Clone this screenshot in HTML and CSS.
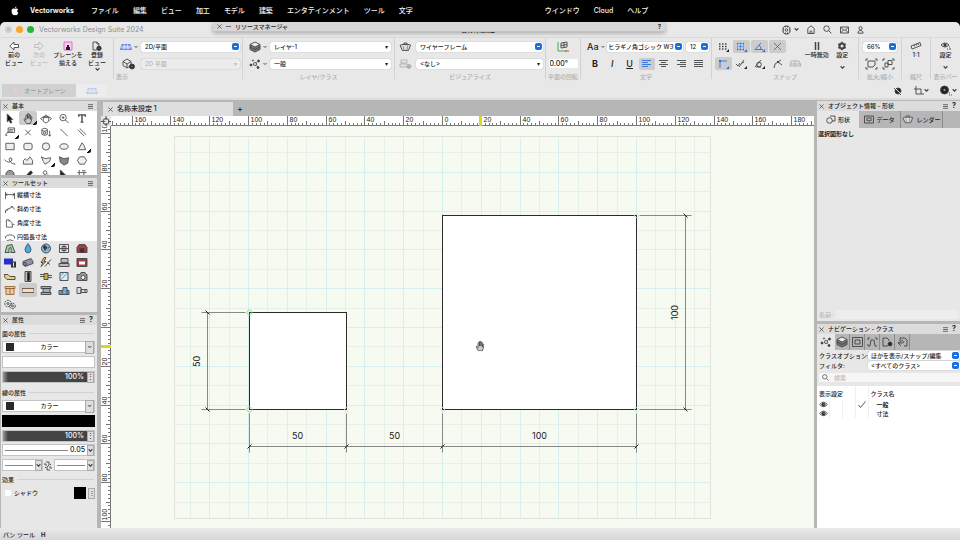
FILE: index.html
```html
<!DOCTYPE html>
<html lang="ja">
<head>
    <meta charset="UTF-8">
    <meta name="viewport" content="width=device-width, initial-scale=1.0">
    <title>Vectorworks Design Suite 2024</title>
    <link rel="stylesheet" href="styles.css">
</head>
<body>
    <!-- Shared icons -->
    <svg class="sprite" aria-hidden="true">
        <symbol id="close" viewBox="0 0 6 6"><path d="M.5.5l5 5M5.500.5l-5 5"/></symbol>
        <symbol id="menu" viewBox="0 0 6 6"><path d="M0 .8h6M0 3h6M0 5.200h6"/></symbol>
        <symbol id="caret" viewBox="0 0 4 4"><path d="M.5 1l1.500 1.500L3.500 1"/></symbol>
        <symbol id="plane" viewBox="0 0 12 6"><path d="M2 .5h8l1.500 5H.5z" fill="#9aaef5" stroke="#5a76e8"/><path d="M4.500.5L4 5.500M7.500.5L8 5.500M1 3h10" stroke="#dfe6ff"/></symbol>
        <symbol id="eye" viewBox="0 0 10 8"><path d="M.5 4Q5-1.500 9.500 4Q5 9 .5 4z"/><circle cx="5" cy="4" r="2" fill="#222"/><circle cx="5.500" cy="3.500" r=".6" fill="#fff" stroke="none"/></symbol>
        <symbol id="layers" viewBox="0 0 12 12"><path d="M1 6v2.500L6 11l5-2.500V6M1 3.500V6l5 2.500L11 6V3.500" fill="#777"/><path d="M1 3.500L6 1l5 2.500L6 6z" fill="#eee"/></symbol>
        <symbol id="nodes" viewBox="0 0 12 12"><path d="M2 7l4-1 3-3M6 6l3 3" stroke-dasharray="1 1"/><circle cx="2" cy="7" r="1" fill="#333"/><circle cx="6" cy="6" r="1.500" fill="#fff"/><circle cx="9.500" cy="3" r="1" fill="#333"/><circle cx="9" cy="9.500" r="1" fill="#333"/><circle cx="4" cy="2.500" r=".6"/></symbol>
        <symbol id="teapot" viewBox="0 0 13 12"><path d="M3 3.500h7L11.500 4 9.500 9.500h-6L1 4.500 3 3.500zM5 3.500V2h3v1.500" fill="#ddd"/><path d="M4 5l1 4.500M8.500 4.500L8 9.500" stroke="#888"/></symbol>
        <symbol id="hand" viewBox="0 0 10 12"><path d="M2.800 7V3q0-1 .8-1t.8.8V6 1.500q0-1 .8-1T6 1.500V6l.2-3.700q.1-.8.800-.7t.6 1V7l.5-2.500q.3-.8.900-.5t.4 1L8.500 9 7.500 11.500h-4L.8 7.500Q.3 6.600 1 6.300t1.800 1.500z"/></symbol>
    </svg>

    <nav class="menubar">
        <svg class="apple" viewBox="0 0 10 12"><path d="M6.800 0Q5 .5 5 2.500 6.800 2.300 6.800 0zM5 3.200Q3.500 2.500 2.500 2.900 0 4 .8 7.500 1.700 11 3.300 11.300 5 10.500 6.500 11.300 8.300 11 9.200 8.200 6.500 6.500 8.800 4 7.500 2.200 5 3.200z" fill="#fff"/></svg>
        <a href="#" class="app-name">Vectorworks</a>
        <a href="#">ファイル</a>
        <a href="#">編集</a>
        <a href="#">ビュー</a>
        <a href="#">加工</a>
        <a href="#">モデル</a>
        <a href="#">建築</a>
        <a href="#">エンタテインメント</a>
        <a href="#">ツール</a>
        <a href="#">文字</a>
        <a href="#" class="after-notch">ウインドウ</a>
        <a href="#">Cloud</a>
        <a href="#">ヘルプ</a>
    </nav>

    <div class="window">
        <header class="titlebar">
            <span class="light grey"></span>
            <span class="light orange"></span>
            <span class="light green"></span>
            <h1>Vectorworks Design Suite 2024</h1>
            <span class="doc-title">名称未設定 1</span>
            <div class="title-tools">
                <button aria-label="設定"><svg width="9" height="10" viewBox="0 0 9 10"><path d="M3 1h3l2 1.800v4.400L6 9H3L1 7.200V2.800z"/><path d="M3.500 1v1.500M5.500 1v1.500M3.500 9V7.500M5.500 9V7.500M1 4h1M7 4h1M1 6h1M7 6h1"/><circle cx="4.500" cy="5" r="1.300"/></svg><svg width="5" height="5"><use href="#caret"/></svg></button>
                <button aria-label="ホーム"><svg width="8" height="9" viewBox="0 0 8 9"><path d="M.8 3.500L4 .8l3.200 2.700v5H.8zM3 8.500v-2q1-1.500 2 0v2"/></svg></button>
                <button aria-label="検索"><svg width="9" height="9" viewBox="0 0 9 9"><circle cx="3.600" cy="3.600" r="2.800"/><path d="M5.800 5.800l2.700 2.700"/></svg></button>
                <button aria-label="メッセージ"><svg width="9" height="8" viewBox="0 0 9 8"><path d="M.5 1h8v6h-8zM.5 1l3 3-3 3M8.500 1l-3 3 3 3M3.500 4h2"/></svg></button>
                <button aria-label="ユーザ"><svg width="7" height="8" viewBox="0 0 7 8"><circle cx="3.500" cy="2.200" r="1.600"/><path d="M1 7.200V6l1.800-1.500h1.400L6 6v1.200z"/></svg></button>
            </div>
        </header>

        <div class="toolbar">
            <section class="group views">
                <button><svg width="10" height="10" viewBox="0 0 10 10"><path d="M5 1v2.500h4.500v3H5V9L.8 5z" fill="#fff"/></svg>前の<br>ビュー</button>
                <button disabled><svg width="10" height="10" viewBox="0 0 10 10"><path d="M5 1v2.500H.5v3H5V9l4.200-4z"/></svg>次の<br>ビュー</button>
                <button><svg width="10" height="10" viewBox="0 0 10 10"><path d="M1 1h8v8H1z" fill="#f6cff0" stroke="#d668c8"/><path d="M4 4h2v2h1v3H3V6h1z" fill="#222" stroke="none"/></svg>プレーンを<br>揃える</button>
                <button><svg width="10" height="10" viewBox="0 0 10 10"><path d="M5 9H1V1h4l2 2v2M5 1v2h2"/><circle cx="7" cy="7.300" r="2.200" fill="#222"/><circle cx="7" cy="7.300" r=".6" fill="#fff"/></svg>登録<br>ビュー<svg width="5" height="5"><use href="#caret"/></svg></button>
            </section>

            <section class="group display">
                <div class="row">
                    <svg width="12" height="6"><use href="#plane"/></svg><svg width="4" height="4"><use href="#caret"/></svg>
                    <label class="pick blue w100"><select aria-label="ビュー"><option>2D/平面</option></select></label>
                </div>
                <div class="row">
                    <svg width="16" height="12" viewBox="0 0 16 12"><path d="M3 3.500L7 1l4 2.500v4L7 10 3 7.500zM3 3.500L7 6l4-2.500M7 6v4"/><circle cx="12" cy="8.500" r="2.500" fill="#222"/><circle cx="12" cy="8.500" r=".8" fill="#fff"/></svg>
                    <label class="pick w100 off"><select aria-label="投影" disabled><option>2D 平面</option></select></label>
                </div>
                <p>表示</p>
            </section>

            <section class="group layers">
                <div class="row">
                    <svg width="12" height="12"><use href="#layers"/></svg><svg width="4" height="4"><use href="#caret"/></svg>
                    <label class="pick w121"><select aria-label="レイヤ"><option>レイヤ-1</option></select></label>
                </div>
                <div class="row">
                    <svg width="12" height="12"><use href="#nodes"/></svg><svg width="4" height="4"><use href="#caret"/></svg>
                    <label class="pick w121"><select aria-label="クラス"><option>一般</option></select></label>
                </div>
                <p>レイヤ/クラス</p>
            </section>

            <section class="group visualize">
                <div class="row">
                    <svg width="13" height="12"><use href="#teapot"/></svg>
                    <label class="pick blue w126"><select aria-label="レンダリング"><option>ワイヤーフレーム</option></select></label>
                </div>
                <div class="row">
                    <svg class="faded" width="13" height="12" viewBox="0 0 13 12"><path d="M2 2h6v3H2zM1 9V6h7v3z"/><circle cx="10" cy="8.500" r="2" fill="#555"/></svg>
                    <label class="pick w126"><select aria-label="背景レンダリング"><option>&lt;なし&gt;</option></select></label>
                </div>
                <p>ビジュアライズ</p>
            </section>

            <section class="group rotate">
                <div class="row"><svg width="14" height="12" viewBox="0 0 14 12"><path d="M2 1v9h9" stroke="#3fa04a"/><path d="M9 10h4" stroke="#d33"/><path d="M5 2l6-1v5l-6 1zM5 4.500l6-1M8 1.500v5"/></svg></div>
                <div class="row"><input type="text" value="0.00°" aria-label="平面の回転"></div>
                <p>平面の回転</p>
            </section>

            <section class="group text">
                <div class="row">
                    <b class="aa">Aa</b><svg width="4" height="4"><use href="#caret"/></svg>
                    <label class="pick blue font-name"><select aria-label="フォント"><option>ヒラギノ角ゴシック W3</option></select></label>
                    <label class="pick blue font-size"><select aria-label="文字サイズ"><option>12</option></select></label>
                </div>
                <div class="row styles">
                    <button><b>B</b></button>
                    <button><i>I</i></button>
                    <button><u>U</u></button>
                    <button class="on" aria-label="左揃え"><svg width="10" height="8" viewBox="0 0 10 8"><path d="M0 .5h9M0 2.500h6M0 4.500h9M0 6.500h6" stroke="#2a73d9"/></svg></button>
                    <button aria-label="中央揃え"><svg width="10" height="8" viewBox="0 0 10 8"><path d="M0 .5h9M2 2.500h5M0 4.500h9M2 6.500h5"/></svg></button>
                    <button aria-label="右揃え"><svg width="10" height="8" viewBox="0 0 10 8"><path d="M0 .5h9M3 2.500h6M0 4.500h9M3 6.500h6"/></svg></button>
                    <button aria-label="両端揃え"><svg width="10" height="8" viewBox="0 0 10 8"><path d="M0 .5h9M0 2.500h9M0 4.500h9M0 6.500h9"/></svg></button>
                </div>
                <p>文字</p>
            </section>

            <section class="group snap">
                <div class="snap-grid">
                    <button aria-label="グリッド"><svg width="11" height="10" viewBox="0 0 11 10"><path d="M1 2h8M1 4.500h8M1 7h8" stroke-width="1.500" stroke-dasharray="1.500 1.500"/><path d="M11 7v3H8z" fill="#222" stroke="none"/></svg></button>
                    <button class="on" aria-label="図形"><svg width="11" height="10" viewBox="0 0 11 10"><path d="M1.500 1.500h6v6h-6zM4.500 1v7M1 4.500h7" stroke="#6b9fe6"/><path d="M1 1.500h1M4 1.500h1M7 1.500h1M1 7.500h1M4 7.500h1M7 7.500h1M4 4.500h1" stroke="#2a73d9" stroke-width="1.500"/><path d="M11 7v3H8z" fill="#2a73d9" stroke="none"/></svg></button>
                    <button class="on" aria-label="角度"><svg width="11" height="10" viewBox="0 0 11 10"><path d="M1 7.500h8M1 7.500L7 1M5 3q2 1.500 2 4.500" stroke="#2a73d9"/><path d="M11 7v3H8z" fill="#2a73d9" stroke="none"/></svg></button>
                    <button class="on" aria-label="交点"><svg width="9" height="9" viewBox="0 0 9 9"><path d="M1 1l7 7M8 1L1 8" stroke="#2a73d9"/></svg></button>
                    <span></span>
                    <button class="on" aria-label="スマート"><svg width="11" height="10" viewBox="0 0 11 10"><path d="M2 9V2h7" stroke="#2a73d9"/><path d="M1 2h2" stroke="#2a73d9" stroke-width="2"/><path d="M11 7v3H8z" fill="#2a73d9" stroke="none"/></svg></button>
                    <button aria-label="定点"><svg width="11" height="10" viewBox="0 0 11 10"><path d="M0 5l2 2 2-3M3 8l5-7M6 4l2-1"/><path d="M11 7v3H8z" fill="#222" stroke="none"/></svg></button>
                    <button aria-label="接線"><svg width="11" height="10" viewBox="0 0 11 10"><path d="M1 8L7 1M2 8h5"/><circle cx="5" cy="5.500" r="2.300"/><path d="M11 7v3H8z" fill="#222" stroke="none"/></svg></button>
                    <button aria-label="エッジ"><svg width="10" height="10" viewBox="0 0 10 10"><path d="M1 9q0-5 4-6l3-2M5 3l4 3"/><path d="M4 3h2" stroke-width="2"/></svg></button>
                    <button aria-label="ワーキングプレーン"><svg class="faded" width="13" height="8" viewBox="0 0 13 8"><path d="M2 1h8l2 5H1zM1 4h11M6 1v5"/></svg></button>
                </div>
                <button class="tall"><svg width="8" height="10" viewBox="0 0 8 10"><path d="M2.500 1v8M5.500 1v8" stroke-width="1.500"/></svg>一時無効</button>
                <button class="tall"><svg width="10" height="10" viewBox="0 0 10 10"><circle cx="5" cy="5" r="2.500" stroke-width="2"/><path d="M5 .8v8.400M1.300 3l7.400 4M8.700 3L1.300 7" stroke-width="1.500" stroke-dasharray="1.800 4.800"/></svg>設定<svg width="5" height="5"><use href="#caret"/></svg></button>
                <p>スナップ</p>
            </section>

            <section class="group zoom">
                <div class="row"><label class="pick blue w35"><select aria-label="表示倍率"><option>66%</option></select></label></div>
                <div class="row">
                    <button aria-label="用紙全体"><svg width="13" height="12" viewBox="0 0 13 12"><path d="M3 1H1v2M10 1h2v2M1 9v2h2M12 9v2h-2M3 3h7v4L8 9H3z"/></svg></button>
                    <button aria-label="図形全体"><svg width="13" height="12" viewBox="0 0 13 12"><path d="M3 1H1v2M10 1h2v2M1 9v2h2M12 9v2h-2M6 2.500h4v4H6zM3 5h3v4H3z"/></svg></button>
                </div>
                <p>拡大/縮小</p>
            </section>

            <section class="group scale">
                <button class="tall"><svg width="12" height="10" viewBox="0 0 12 10"><path d="M1 5l9-3.500 1 3L2 8zM4 4l.5 1.500M6 3l.5 1.500M8 2.500L8.500 4"/></svg>1:1</button>
                <p>縮尺</p>
            </section>

            <section class="group bar">
                <button class="tall"><svg width="11" height="10" viewBox="0 0 11 10"><path d="M1 4q4-4 8 0-4 4-8 0zM7 8h1M9 8h2M9 6h1"/><circle cx="5" cy="4" r="1.200" fill="#222"/></svg>設定<svg width="5" height="5"><use href="#caret"/></svg></button>
                <p>表示バー</p>
            </section>
        </div>

        <div class="modebar">
            <button class="auto-plane"><i class="pink"></i>オートプレーン</button>
            <button class="plane-btn" aria-label="プレーン"><svg class="faded" width="12" height="6"><use href="#plane"/></svg></button>
            <div class="mode-tools">
                <button aria-label="表示切替"><svg width="10" height="10" viewBox="0 0 10 10"><circle cx="5" cy="5" r="3" fill="#222"/><path d="M1 1l8 8" stroke="#fff"/><path d="M1 2l7 7"/></svg></button>
                <button aria-label="座標"><svg width="10" height="10" viewBox="0 0 10 10"><path d="M2 0v8h8M0 3h7v5"/></svg><svg width="5" height="5"><use href="#caret"/></svg></button>
                <button aria-label="表示オプション"><svg width="12" height="11" viewBox="0 0 12 11"><circle cx="4.500" cy="5" r="4" fill="#222"/><circle cx="4.500" cy="5" r="1" fill="#fff"/><path d="M9 10h1M11 10h1M9 8h1"/></svg><svg width="5" height="5"><use href="#caret"/></svg></button>
            </div>
        </div>

        <main class="workspace">
            <aside class="left">
                <section class="palette basic">
                    <h2><svg><use href="#close"/></svg>基本<svg class="end"><use href="#menu"/></svg></h2>
                    <div class="tools">
                        <button aria-label="セレクション"><svg viewBox="0 0 12 12"><path d="M3 1l6 6H6.500L8 10.500l-1.500.5L5 8 3 9.500z" fill="#111"/></svg></button>
                        <button class="on more" aria-label="パン"><svg viewBox="-1 0 12 12"><use href="#hand" width="10" height="12"/></svg></button>
                        <button aria-label="フライオーバー"><svg viewBox="0 0 12 12"><path d="M3 5h6v4L6 11 3 9zM3 5l3-3 3 3M0 6q6-5 12 0M0 6l2 2M12 6l-2 2"/></svg></button>
                        <button aria-label="拡大表示"><svg viewBox="0 0 12 12"><circle cx="5" cy="5" r="3.500"/><path d="M7.500 7.500L11 11M3.500 5h3M5 3.500v3"/></svg></button>
                        <button aria-label="文字"><svg viewBox="0 0 12 12"><path d="M2.500 4V2h7v2M6 2v8M4.500 10h3" stroke-width="1.500"/></svg></button>
                        <button class="more" aria-label="引出線"><svg viewBox="0 0 12 12"><path d="M4 1h7v5H4zM5 3h5M5 4.500h4M4 5L1 9h2"/></svg></button>
                        <button aria-label="2D基準点"><svg viewBox="0 0 12 12"><path d="M3 3l6 6M9 3L3 9"/></svg></button>
                        <button aria-label="シンボル"><svg viewBox="0 0 12 12"><path d="M10 4v6M8.500 8.500L10 10l1.500-1.500M1.500 3v5q3 2.500 6 0V3"/><ellipse cx="4.500" cy="3" rx="3" ry="1.500"/><circle cx="4.500" cy="6.500" r="1.300"/></svg></button>
                        <button aria-label="直線"><svg viewBox="0 0 12 12"><path d="M2 2l8 8"/></svg></button>
                        <button aria-label="ダブルライン"><svg viewBox="0 0 12 12"><path d="M1.500 3l7 7M3.500 1.500l7 7"/></svg></button>
                        <button aria-label="四角形"><svg viewBox="0 0 12 12"><path d="M1.500 2.500h9v7h-9z" fill="#eee"/></svg></button>
                        <button aria-label="隅の丸い四角形"><svg viewBox="0 0 12 12"><rect x="1.500" y="2.500" width="9" height="7" rx="2" fill="#eee"/></svg></button>
                        <button aria-label="円"><svg viewBox="0 0 12 12"><circle cx="6" cy="6" r="4" fill="#eee"/></svg></button>
                        <button aria-label="楕円"><svg viewBox="0 0 12 12"><ellipse cx="6" cy="6" rx="4.500" ry="3" fill="#eee"/></svg></button>
                        <button class="more" aria-label="円弧"><svg viewBox="0 0 12 12"><path d="M2 9.500L6 2q3 3 4 7.500z" fill="#eee"/></svg></button>
                        <button aria-label="フリーハンド"><svg viewBox="0 0 12 12"><path d="M0 5q4 5 8 1 1-3-2-3-2 1 0 4 2 3 6 3"/></svg></button>
                        <button aria-label="曲線"><svg viewBox="0 0 12 12"><path d="M1 10V6l2-2 2 2 3-4 3 4v4z" fill="#eee"/></svg></button>
                        <button class="more" aria-label="多角形"><svg viewBox="0 0 12 12"><path d="M1 2l4 2 6-1-1 4-5 3-2-3z" fill="#eee"/></svg></button>
                        <button aria-label="塗り多角形"><svg viewBox="0 0 12 12"><path d="M1 2l5 2 5-1-1 6-4 2-4-3z" fill="#888"/></svg></button>
                        <button aria-label="正多角形"><svg viewBox="0 0 12 12"><path d="M3.500 2h5L11 6l-2.500 4h-5L1 6z" fill="#eee"/></svg></button>
                        <button aria-label="渦巻き"><svg viewBox="0 0 12 12"><circle cx="6" cy="6" r="4.500" fill="#999"/></svg></button>
                        <button aria-label="アイドロッパ"><svg viewBox="0 0 12 12"><path d="M2 10l4-5 3-3 2 2-3 3z" fill="#222"/></svg></button>
                        <button aria-label="類似図形選択"><svg viewBox="0 0 12 12"><circle cx="5" cy="4" r="2"/><circle cx="8" cy="8" r="1.500"/></svg></button>
                        <button aria-label="属性"><svg viewBox="0 0 12 12"><path d="M2 1l6 6H2z" fill="#222"/></svg></button>
                        <button aria-label="変形"><svg viewBox="0 0 12 12"><path d="M1 4h10M3 1v9M8 3v6M6 2h4"/></svg></button>
                    </div>
                </section>

                <section class="palette">
                    <h2><svg><use href="#close"/></svg>ツールセット<svg class="end"><use href="#menu"/></svg></h2>
                    <ul class="tool-list">
                        <li><svg viewBox="0 0 12 10"><path d="M1 1v8M11 2v7M1 4h10M3 2.500L1.500 4 3 5.500M9 2.500L10.500 4 9 5.500"/></svg>縦横寸法</li>
                        <li><svg viewBox="0 0 12 10"><path d="M1 9V6l8-4 2 3M2 7l2-3M7 1.500L9 2"/></svg>斜め寸法</li>
                        <li><svg viewBox="0 0 12 10"><path d="M2 9V1h3q4 2 4 8zM5 1v2M9 6h2"/></svg>角度寸法</li>
                        <li><svg viewBox="0 0 12 10"><path d="M1 4q5-4 10 0M1 4v2M11 4v2M2 9q4-3 8 0"/></svg>円弧長寸法</li>
                    </ul>
                    <div class="tools sets">
                        <button aria-label="敷地計画"><svg viewBox="0 0 12 10"><path d="M1 9l2-7 5-1 3 8z" fill="#9ad3a0"/><path d="M5 9V5l2-1v5" fill="#fff"/></svg></button>
                        <button aria-label="灌水"><svg viewBox="0 0 12 10"><path d="M6 0q3 4 3 6 0 3-3 3.500Q3 9 3 6q0-2 3-6z" fill="#4fa9dc" stroke="#357"/></svg></button>
                        <button aria-label="GIS"><svg viewBox="0 0 12 10"><circle cx="6" cy="5" r="4.500" fill="#7fb9dd"/><path d="M3 3l2-1 2 2-2 3zM8 5l1.500-2" fill="#333"/></svg></button>
                        <button aria-label="建物"><svg viewBox="0 0 12 10"><path d="M1.500 1h9v8h-9zM4 3h4v4H4zM6 1v8M2 5h8"/></svg></button>
                        <button aria-label="家具"><svg viewBox="0 0 12 10"><path d="M1 4l2-3h6l2 3v5H1z" fill="#a33c44"/><path d="M4 9V5h4v4" fill="#622"/></svg></button>
                        <button aria-label="照明"><svg viewBox="0 0 12 10"><path d="M0 1h9v6H0z" fill="#2530c8" stroke="none"/><path d="M7 4h5v6H7z" fill="#333" stroke="none"/><path d="M9.500 5v4" stroke="#fff"/></svg></button>
                        <button aria-label="トラス"><svg viewBox="0 0 12 10"><path d="M1 4l8-3 2 3v2L3 9 1 7z" fill="#9092b4"/><circle cx="3" cy="6.500" r="1.500"/></svg></button>
                        <button aria-label="電源"><svg viewBox="0 0 12 10"><path d="M4 0L1 5h2L1 9l5-5H4l2-4z" fill="#f1c232"/><path d="M5 9l6-7M7 5l3 2"/></svg></button>
                        <button aria-label="座席"><svg viewBox="0 0 12 10"><path d="M3 1h7v4H3zM1 6h10v3H1z" fill="#bbb"/></svg></button>
                        <button aria-label="画面"><svg viewBox="0 0 12 10"><path d="M1 1h10v8H1z" fill="#a33c44"/><path d="M3 4h6v3H3z" fill="#fff" stroke="none"/></svg></button>
                        <button aria-label="ケーブル"><svg viewBox="0 0 12 10"><path d="M0 3h4l2 2h5v3H3L1 6z" fill="#e5cf7d"/></svg></button>
                        <button aria-label="ドア"><svg viewBox="0 0 12 10"><path d="M3 0h6v10H3z" fill="#bbb"/><path d="M5.500 1h2v8h-2z" fill="#111"/></svg></button>
                        <button aria-label="プラグ"><svg viewBox="0 0 12 10"><path d="M0 5h4M4 2v6h4V2zM8 4h4M8 6h4M0 3h4" fill="#c9a94c"/></svg></button>
                        <button aria-label="図面"><svg viewBox="0 0 12 10"><path d="M2 1h8v8H2z" fill="#d7ebf8"/><path d="M2 9l8-8M3 4l3-3" stroke="#49a"/></svg></button>
                        <button aria-label="カメラ"><svg viewBox="0 0 12 10"><path d="M1 3h3l1-2h4l1 2h1v6H1z" fill="#999"/><circle cx="7" cy="6" r="2" fill="#fff"/></svg></button>
                        <button aria-label="棚"><svg viewBox="0 0 12 10"><path d="M1 1h10v2H1zM2 3h8v6H2zM6 3v6" fill="#e8c9a2" stroke="#963"/></svg></button>
                        <button class="on" aria-label="寸法/注釈"><svg viewBox="0 0 12 10"><path d="M0 3h12v4H0z" fill="#f3dcb9" stroke="#654"/></svg></button>
                        <button aria-label="鋼材"><svg viewBox="0 0 12 10"><path d="M1 1h10v2H1zM1 7h10v2H1zM3 3h7v4H3z" fill="#a0acb8"/></svg></button>
                        <button aria-label="配管"><svg viewBox="0 0 12 10"><path d="M1 5h4V2h4v3h2v4H1z" fill="#73a9d1"/><path d="M4 5v4M9 5v4"/></svg></button>
                        <button aria-label="ボルト"><svg viewBox="0 0 12 10"><path d="M1 2h4v6H1zM5 4h6v3H5zM9 4v3" fill="#ddd"/></svg></button>
                        <button aria-label="機械部品"><svg viewBox="0 0 12 10"><circle cx="4" cy="4" r="3.200" stroke-dasharray="2 .7"/><circle cx="4" cy="4" r="1"/><circle cx="8.500" cy="6.500" r="2.800" stroke-dasharray="2 .7"/><circle cx="8.500" cy="6.500" r="1"/></svg></button>
                    </div>
                </section>

                <section class="palette attrs">
                    <h2><svg><use href="#close"/></svg>属性<svg class="end"><use href="#menu"/></svg><b>?</b></h2>
                    <h3>面の属性</h3>
                    <label class="attr"><i class="swatch"></i><select aria-label="面の種類"><option>カラー</option></select></label>
                    <div class="attr fill-white"></div>
                    <div class="attr opacity"><span>100%</span><button aria-label="面の不透明度">⋮</button></div>
                    <h3>線の属性</h3>
                    <label class="attr"><i class="swatch"></i><select aria-label="線の種類"><option>カラー</option></select></label>
                    <div class="attr fill-black"></div>
                    <div class="attr opacity"><span>100%</span><button aria-label="線の不透明度">⋮</button></div>
                    <div class="attr line"><hr><span>0.05</span><button aria-label="線の太さ"><svg width="5" height="5"><use href="#caret"/></svg></button></div>
                    <div class="ends">
                        <div class="attr line"><hr><button aria-label="始点マーカー"><svg width="5" height="5"><use href="#caret"/></svg></button></div>
                        <svg width="8" height="10" viewBox="0 0 8 10"><path d="M2 1h3v3M6 9H3V6M1 2v2h2M7 8V6H5M3 6l2-2M1 6l1 1M7 4L6 3"/></svg>
                        <div class="attr line"><hr><button aria-label="終点マーカー"><svg width="5" height="5"><use href="#caret"/></svg></button></div>
                    </div>
                    <h3>効果</h3>
                    <div class="shadow">
                        <label><input type="checkbox">シャドウ</label>
                        <i class="black"></i><button aria-label="シャドウ設定">⋮</button>
                    </div>
                </section>
            </aside>

            <section class="document">
                <div class="tabs">
                    <div class="tab"><svg><use href="#close"/></svg>名称未設定 1</div>
                    <button aria-label="新規">+</button>
                </div>
                <div class="sheet">
                    <svg class="corner" viewBox="0 0 10 10"><circle cx="5" cy="5.500" r="3"/><path d="M5 0v4M5 7v3M0 5.500h4M7 5.500h3"/></svg>
                    <svg class="ruler" id="ruler-x"></svg>
                    <svg class="ruler" id="ruler-y"></svg>
                    <svg class="canvas">
                        <g transform="translate(331.5 201.5)">
                            <g id="grid"></g>
                            <rect class="border" x="-268" y="-191" width="536" height="382"/>
                            <rect class="shape" x="0" y="-112" width="194" height="194"/>
                            <rect class="shape" x="-193" y="-15" width="97" height="97"/>
                            <g class="snap-marks">
                                <circle cx="-193" cy="-15" r="2.500"/>
                                <circle cx="-193" cy="82" r="2.500"/>
                            </g>
                            <g class="snap-marks light-marks">
                                <circle cx="-96" cy="82" r="2"/>
                                <circle cx="0" cy="82" r="2"/>
                                <circle cx="194" cy="82" r="2"/>
                                <circle cx="194" cy="-112" r="2"/>
                            </g>
                            <g class="dim">
                                <path d="M-193 119H194M-193 86v39M-96 86v39M0 86v39M194 86v39"/>
                                <path d="M-235-15v97M-241-15h44M-241 82h44"/>
                                <path d="M243-112v194M197-112h52M197 82h52"/>
                                <path class="tick" d="M-195 121l4-4M-98 121l4-4M-2 121l4-4M192 121l4-4M-237-17l4 4M-237 80l4 4M241-114l4 4M241 80l4 4"/>
                                <text x="-145" y="111">50</text>
                                <text x="-48" y="111">50</text>
                                <text x="97" y="111">100</text>
                                <text transform="translate(-243 34) rotate(-90)">50</text>
                                <text transform="translate(235 -15) rotate(-90)">100</text>
                            </g>
                            <svg class="grab" x="33" y="13" width="9" height="11"><use href="#hand"/></svg>
                        </g>
                    </svg>
                </div>
            </section>

            <aside class="right">
                <section class="palette info">
                    <h2><svg><use href="#close"/></svg>オブジェクト情報 - 形状<svg class="end"><use href="#menu"/></svg><b>?</b></h2>
                    <div class="info-tabs">
                        <button class="active"><svg width="10" height="9" viewBox="0 0 10 9"><path d="M4 1h5v5H6"/><circle cx="3.500" cy="5.500" r="2.800"/></svg>形状</button>
                        <button><svg width="10" height="9" viewBox="0 0 10 9"><path d="M.5 1h9v7h-9zM2 3h6M2 5h2v1h2V5h2"/></svg>データ</button>
                        <button><svg width="12" height="11"><use href="#teapot"/></svg>レンダー</button>
                    </div>
                    <p>選択図形なし</p>
                    <label class="name">名前: <input type="text" disabled></label>
                </section>
                <section class="palette nav">
                    <h2><svg><use href="#close"/></svg>ナビゲーション - クラス<svg class="end"><use href="#menu"/></svg><b>?</b></h2>
                    <div class="nav-tabs">
                        <button class="active" aria-label="クラス"><svg width="12" height="12"><use href="#nodes"/></svg></button>
                        <button aria-label="デザインレイヤ"><svg width="12" height="12"><use href="#layers"/></svg></button>
                        <button aria-label="シートレイヤ"><svg width="11" height="10" viewBox="0 0 11 10"><path d="M.5.5h10v9H.5zM3 3h5v4H3z"/></svg></button>
                        <button aria-label="ビューポート"><svg width="11" height="10" viewBox="0 0 11 10"><path d="M1 3V1h2M8 1h2v2M1 9h2l1-6h3l1 6h2M1 7v2"/></svg></button>
                        <button aria-label="登録画面"><svg width="11" height="10" viewBox="0 0 11 10"><path d="M6 9H1V1h4l2 2v1"/><circle cx="8" cy="7" r="2" fill="#222"/></svg></button>
                        <button aria-label="参照"><svg width="11" height="10" viewBox="0 0 11 10"><path d="M3 4V1h5l2 2v6H7M6 3L1 6l3 3M1 6h4q2 0 2-2"/></svg></button>
                    </div>
                    <div class="field"><label for="class-option">クラスオプション:</label><span class="pick blue"><select id="class-option"><option>ほかを表示/スナップ/編集</option></select></span></div>
                    <div class="field"><label for="filter">フィルタ:</label><span class="pick blue"><select id="filter"><option>&lt;すべてのクラス&gt;</option></select></span></div>
                    <label class="search"><svg width="7" height="7" viewBox="0 0 9 9"><circle cx="3.600" cy="3.600" r="2.800"/><path d="M5.800 5.800l2.700 2.700"/></svg><input type="text" placeholder="検索" aria-label="検索"></label>
                    <div class="classes">
                        <table>
                            <thead><tr><th colspan="3">表示設定</th><th></th><th>クラス名</th></tr></thead>
                            <tbody>
                                <tr><td><svg width="9" height="7"><use href="#eye"/></svg></td><td></td><td></td><td><svg width="8" height="7" viewBox="0 0 8 7"><path d="M.5 4l2 2.500L7.500.5"/></svg></td><td><b>一般</b></td></tr>
                                <tr><td><svg width="9" height="7"><use href="#eye"/></svg></td><td></td><td></td><td></td><td>寸法</td></tr>
                            </tbody>
                        </table>
                    </div>
                </section>
            </aside>
        </main>

        <footer class="status">パン ツール<b>H</b></footer>
    </div>

    <div class="resource-manager">
        <svg><use href="#close"/></svg><svg viewBox="0 0 6 6"><path d="M0 3h6"/></svg>リソースマネージャ<b>?</b>
    </div>

    <script src="script.js"></script>
</body>
</html>
```

FILE: styles.css
```css
* {
    box-sizing: border-box;
}

body {
    margin: 0;
    height: 100vh;
    display: flex;
    flex-direction: column;
    position: relative;
    background-color: #000;
    color: #222;
    font-family: Inter, "Noto Sans CJK JP", sans-serif;
    font-size: 6px;
    font-weight: 500;
    line-height: 8px;
    overflow: hidden;
}

h1, h2, h3, p, ul {
    margin: 0;
    padding: 0;
    font-size: 6px;
    font-weight: 500;
}

svg {
    fill: none;
    stroke: #444;
    stroke-width: 0.9;
    flex: none;
}

button, input, select {
    font: inherit;
    color: inherit;
    border: none;
    background: none;
    padding: 0;
    margin: 0;
}

button {
    display: inline-flex;
    align-items: center;
    justify-content: center;
}

.sprite {
    position: absolute;
    width: 0;
    height: 0;
}

.faded {
    opacity: 0.35;
}

/* Menu bar */
.menubar {
    height: 22px;
    flex: none;
    display: flex;
    align-items: center;
    gap: 14px;
    padding: 0 11px;
    font-size: 7px;
}

.menubar a {
    color: #f2f2f2;
    text-decoration: none;
    white-space: nowrap;
}

.menubar .app-name {
    font-weight: 700;
    margin: 0 3px 0 -3px;
}

.menubar .after-notch {
    margin-left: 118px;
}

.apple {
    width: 8px;
    height: 10px;
    stroke: none;
}

/* Window */
.window {
    flex: 1;
    min-height: 0;
    display: flex;
    flex-direction: column;
    background-color: #e8e8e8;
    border-radius: 5px 5px 0 0;
    overflow: hidden;
}

.titlebar {
    height: 16px;
    flex: none;
    display: flex;
    align-items: center;
    padding-left: 5px;
    border-bottom: 1px solid #dadada;
}

.light {
    width: 7px;
    height: 7px;
    margin-right: 4px;
    border-radius: 50%;
}

.grey {
    background-color: #bdbdbd;
    border: 2px solid #cfcfcf;
}

.orange {
    background-color: #f5a62b;
}

.green {
    background-color: #27b43a;
}

.titlebar h1 {
    width: 421px;
    margin-left: 1px;
    color: #8f8f8f;
    font-size: 7px;
    font-weight: 400;
}

.doc-title {
    width: 100px;
    font-size: 7px;
}

.title-tools {
    display: flex;
    align-items: center;
    gap: 8px;
    margin-left: auto;
    padding-right: 96px;
}

.title-tools button {
    gap: 3px;
}

.resource-manager {
    position: absolute;
    left: 213px;
    top: 22px;
    width: 452px;
    height: 10px;
    display: flex;
    align-items: center;
    gap: 4px;
    padding: 0 4px;
    background-color: #d6d6d6;
    border-bottom: 1px solid #c2c2c2;
    box-shadow: 0 1px 4px rgba(0, 0, 0, 0.3);
    clip-path: inset(0 -6px -6px -6px);
}

.resource-manager svg {
    width: 5px;
    height: 5px;
}

.resource-manager b {
    margin-left: auto;
}

/* Toolbar */
.toolbar {
    display: flex;
    flex: none;
    height: 43px;
}

.group {
    position: relative;
    flex: none;
    height: 41px;
    padding: 0 4px;
    border-right: 1px solid #d2d2d2;
}

.group .row {
    display: flex;
    align-items: center;
    gap: 2px;
    height: 17px;
}

.group p {
    position: absolute;
    left: 0;
    right: 0;
    bottom: -2px;
    text-align: center;
    color: #b0b0b0;
    white-space: nowrap;
}

.views {
    display: grid;
    grid-template-columns: 24px 26px 32px 26px;
    width: 114px;
    padding: 3px 2px;
}

.views button,
.tall {
    display: flex;
    flex-direction: column;
    justify-content: flex-start;
    white-space: nowrap;
}

.views button:disabled {
    color: #bbb;
}

.views button:disabled svg {
    stroke: #bbb;
}

.display {
    width: 129px;
    padding: 0 2px 0 6px;
}

.display p {
    right: auto;
    left: 2px;
}

.layers {
    width: 152px;
    padding: 0 3px 0 6px;
}

.visualize {
    width: 151px;
    padding-right: 2px;
}

.rotate {
    width: 35px;
}

.text {
    width: 131px;
    padding: 0 2px 0 6px;
}

.snap {
    display: flex;
    width: 147px;
    padding: 0 3px;
}

.zoom {
    width: 43px;
}

.scale {
    width: 29px;
}

.bar {
    width: 29px;
    border-right: none;
}

.row .pick {
    margin-left: auto;
}

.pick {
    position: relative;
    display: block;
    height: 10px;
}

.pick select {
    display: block;
    width: 100%;
    height: 10px;
    padding: 0 4px;
    appearance: none;
    background-color: #fff;
    border-radius: 2px;
    box-shadow: 0 0 1px rgba(0, 0, 0, 0.4);
    color: #222;
    opacity: 1;
}

.pick::after {
    content: "▾";
    position: absolute;
    right: 2px;
    top: 1px;
    width: 6px;
    text-align: center;
    pointer-events: none;
}

.pick.blue::after {
    content: "";
    width: 7px;
    height: 7px;
    right: 1px;
    border-radius: 2px;
    background: linear-gradient(#fff, #fff) center / 3px 1px no-repeat, #1b6ee0;
}

.pick.off select {
    background-color: #ececec;
    color: #b5b5b5;
}

.pick.off::after {
    color: #bbb;
}

.w100 { width: 99px; }
.w121 { width: 121px; }
.w126 { width: 127px; }
.w35 { width: 35px; }

.font-name {
    width: 76px;
}

.font-size {
    width: 23px;
}

.font-name select {
    padding: 0 1px;
}

.zoom .row {
    justify-content: space-evenly;
}

.rotate .row {
    justify-content: center;
}

.rotate input {
    width: 29px;
    height: 9px;
    padding: 0 1px;
    background-color: #fff;
    border-radius: 2px;
    font-size: 7px;
}

.aa {
    font-size: 9px;
    font-weight: 500;
}

.row.styles {
    justify-content: space-between;
    gap: 0;
    margin-right: 2px;
}

.styles button {
    width: 16px;
    height: 12px;
    border-radius: 2px;
    font-size: 9px;
}

.on {
    background-color: #cccccc;
}

.snap-grid {
    display: grid;
    grid-template-columns: repeat(5, 17px);
    grid-auto-rows: 13px;
    gap: 4px 1px;
    padding-top: 2px;
}

.snap-grid button {
    border-radius: 2px;
}

.tall {
    width: 26px;
    padding-top: 3px;
}

.scale .tall,
.bar .tall {
    width: 100%;
}

.tall svg + svg {
    margin-top: 6px;
}

/* Mode bar */
.modebar {
    display: flex;
    align-items: center;
    flex: none;
    height: 19px;
    padding: 2px 2px 0;
    border-bottom: 2px solid #dcdcdc;
}

.auto-plane {
    width: 74px;
    height: 13px;
    gap: 5px;
    background-color: #d1d1d1;
    color: #9c9c9c;
}

.pink {
    width: 7px;
    height: 7px;
    border: 1px solid #d9c5d6;
    background-color: #dccfda;
}

.plane-btn {
    width: 31px;
    height: 13px;
    background-color: #ededed;
}

.mode-tools {
    display: flex;
    gap: 11px;
    margin-left: auto;
    padding-right: 1px;
}

/* Palettes */
.workspace {
    flex: 1;
    min-height: 0;
    display: flex;
    gap: 4px;
    padding: 1px 0 0 1px;
    background-color: #b6b6b6;
}

.left {
    width: 96px;
    flex: none;
    display: flex;
    flex-direction: column;
    gap: 3px;
}

.palette {
    background-color: #e7e7e7;
}

.palette h2 {
    display: flex;
    align-items: center;
    gap: 4px;
    height: 10px;
    padding: 0 4px 0 2px;
    background-color: #dcdcdc;
}

.palette h2 svg {
    width: 5px;
    height: 5px;
}

.palette h2 .end {
    margin-left: auto;
}

.palette h2 b {
    font-size: 7px;
}

.tools {
    display: grid;
    grid-template-columns: repeat(5, 18px);
    grid-auto-rows: 14px;
}

.basic .tools {
    height: 64px;
    overflow: hidden;
    background-color: #fff;
}

.tools button {
    border-radius: 2px;
}

/* Black corner on tools that open a submenu */
.tools .more {
    background-image: linear-gradient(135deg, transparent 50%, #111 50%);
    background-position: right bottom;
    background-size: 4px 4px;
    background-repeat: no-repeat;
}

.tools svg {
    width: 12px;
    height: 11px;
}

.tool-list {
    height: 53px;
    overflow: hidden;
    list-style: none;
    background-color: #fff;
}

.tool-list li {
    display: flex;
    align-items: center;
    gap: 1px;
    height: 14px;
    padding-left: 3px;
}

.tool-list svg {
    width: 12px;
    height: 9px;
}

.sets {
    height: 71px;
}

.attrs {
    flex: 1;
}

.attrs h2 {
    margin-bottom: 1px;
}

.attrs h3 {
    display: flex;
    align-items: center;
    gap: 3px;
    height: 15px;
    padding-left: 1px;
}

.attrs h3::after {
    content: "";
    flex: 1;
    height: 1px;
    margin-right: 3px;
    background-color: #d2d2d2;
}

.attr {
    position: relative;
    display: flex;
    align-items: center;
    height: 12px;
    margin: 0 2px 3px 1px;
    background-color: #fff;
    border: 1px solid #c4c4c4;
}

.attr select {
    width: 100%;
    appearance: none;
    text-align: center;
    text-align-last: center;
}

label.attr::after {
    content: "⌄";
    width: 7px;
    height: 11px;
    text-align: center;
    line-height: 8px;
    flex: none;
    border: 1px solid #aaa;
    background-color: #dedede;
}

.swatch {
    width: 8px;
    height: 8px;
    margin-left: 3px;
    flex: none;
    background-color: #2a2a2a;
}

.fill-black {
    background-color: #000;
    border-color: #000;
}

.opacity {
    margin-bottom: 2px;
    background: linear-gradient(90deg, #999, #444 5px);
    color: #fff;
    justify-content: flex-end;
    gap: 3px;
    font-size: 7px;
}

.attr button,
.shadow button {
    width: 7px;
    height: 11px;
    flex: none;
    border: 1px solid #aaa;
    background-color: #dedede;
    color: #222;
}

.line {
    gap: 2px;
    font-size: 7px;
}

.line hr {
    flex: 1;
    margin: 0 0 0 2px;
    border: none;
    border-top: 1px solid #888;
}

.ends {
    display: flex;
    align-items: center;
    margin-right: 2px;
}

.ends .attr {
    flex: 1;
    margin-right: 0;
    margin-bottom: 1px;
}

.ends > svg {
    margin: 0 1px;
}

.shadow {
    display: flex;
    align-items: center;
    gap: 2px;
    margin: 0 2px 0 4px;
}

.shadow label {
    display: flex;
    align-items: center;
    gap: 3px;
    margin-right: auto;
}

.shadow input {
    width: 6px;
    height: 6px;
    appearance: none;
    background-color: #fff;
    border-radius: 1px;
}

.black {
    width: 12px;
    height: 12px;
    background-color: #000;
}

/* Document */
.document {
    flex: 1;
    min-width: 0;
    display: flex;
    flex-direction: column;
    padding-top: 1px;
}

.tabs {
    display: flex;
    height: 14px;
    flex: none;
}

.tab {
    display: flex;
    align-items: center;
    gap: 4px;
    width: 130px;
    margin-left: 2px;
    padding-left: 5px;
    background-color: #dedede;
    font-size: 7px;
}

.tab svg {
    width: 5px;
    height: 5px;
}

.tabs button {
    width: 14px;
    font-size: 9px;
    font-weight: 400;
}

.sheet {
    flex: 1;
    min-height: 0;
    display: grid;
    grid-template-columns: 10px 1fr;
    grid-template-rows: 10px 1fr;
    margin-right: -1px;
    background-color: #fff;
}

.sheet > svg {
    display: block;
    width: 100%;
    height: 100%;
    min-width: 0;
    min-height: 0;
    overflow: hidden;
}

.corner {
    background-color: #e4e4e4;
}

.ruler {
    font-family: "Liberation Sans", sans-serif;
    font-size: 7px;
    stroke: #777;
    stroke-width: 1;
}

.ruler text {
    fill: #222;
    stroke: none;
}

.ruler .pointer {
    stroke: #d8d820;
    stroke-width: 3;
}

.canvas {
    background-color: #f6faf1;
    stroke: #444;
    stroke-width: 1;
}

#grid .major {
    stroke: #d6f0ee;
}

#grid .minor {
    stroke: #e4f1e9;
}

.border {
    stroke: #dde5da;
}

.shape {
    fill: #fff;
    stroke: #2c2c2c;
}

.snap-marks {
    stroke: #a0e0a0;
}

.light-marks {
    stroke: #dcebd8;
}

.dim path {
    stroke: #888;
}

.dim .tick {
    stroke: #222;
}

.dim text {
    fill: #222;
    stroke: none;
    font-size: 9px;
    font-weight: 400;
    text-anchor: middle;
    font-family: Inter, sans-serif;
}

.grab {
    fill: #ccc;
    stroke: #444;
}

/* Right palettes */
.right {
    width: 143px;
    flex: none;
    display: flex;
    flex-direction: column;
    gap: 3px;
}

.info {
    flex: none;
    height: 220px;
    display: flex;
    flex-direction: column;
}

.info-tabs,
.nav-tabs {
    display: flex;
    flex: none;
    background-color: #b6b6b6;
}

.info-tabs {
    height: 17px;
}

.info-tabs button {
    gap: 2px;
    width: 42px;
    white-space: nowrap;
}

.info-tabs .active {
    background-color: #e7e7e7;
}

.info-tabs button + button,
.nav-tabs button + button {
    border-right: 1px solid #8c8c8c;
}

.info p {
    padding: 2px 1px;
    font-weight: 700;
}

.name {
    display: flex;
    align-items: center;
    gap: 3px;
    margin-top: auto;
    padding: 0 2px 2px;
    color: #b5b5b5;
}

.name input {
    flex: 1;
    height: 9px;
    background-color: #ededed;
}

.nav {
    flex: 1;
    min-height: 0;
    display: flex;
    flex-direction: column;
}

.nav-tabs {
    height: 16px;
    margin-bottom: 1px;
}

.nav-tabs button {
    width: 15px;
}

.nav-tabs .active {
    width: 18px;
    background-color: #e7e7e7;
}

.field {
    display: flex;
    align-items: center;
    height: 10px;
    padding: 0 0 0 2px;
}

.field label {
    width: 49px;
    white-space: nowrap;
}

.field .pick {
    flex: 1;
}

.field .pick select {
    height: 9px;
    padding: 0 3px;
}

.search {
    display: flex;
    align-items: center;
    gap: 5px;
    height: 9px;
    margin: 2px 0 4px 2px;
    padding-left: 3px;
    background-color: #f6f6f6;
}

.search input::placeholder {
    color: #bbb;
}

.classes {
    flex: 1;
    background-color: #fff;
}

table {
    width: 100%;
    border-collapse: collapse;
    table-layout: fixed;
}

th, td {
    height: 9px;
    padding: 0 2px;
    text-align: left;
    font-weight: 500;
    line-height: 7px;
    border-right: 1px solid #eee;
}

th {
    height: 14px;
}

th:last-child, td:last-child {
    width: 92px;
    border-right: none;
}

td:last-child {
    padding-left: 8px;
}

td:nth-child(4) {
    text-align: center;
}

td svg {
    display: block;
}

td:nth-child(4) svg {
    margin: 0 auto;
}

/* Status bar */
.status {
    display: flex;
    align-items: center;
    gap: 6px;
    height: 12px;
    flex: none;
    padding: 2px 3px 0;
    background: linear-gradient(#e9e9e9, #d6d6d6);
}
```

FILE: script.js
```js
// Pixels per drawing unit, and where drawing zero sits on the canvas
const scale = 1.94;
const originX = 331.5;
const originY = 201.5;

function add(parent, name, attrs, text) {
    const el = document.createElementNS('http://www.w3.org/2000/svg', name);
    for (const key in attrs) {
        el.setAttribute(key, attrs[key]);
    }
    if (text !== undefined) {
        el.textContent = text;
    }
    parent.appendChild(el);
}

function tickLength(unit) {
    if (unit % 20 === 0) return 10;
    return unit % 10 === 0 ? 5 : 3;
}

function drawRuler(ruler, origin, size, vertical) {
    ruler.innerHTML = '';
    const first = Math.ceil(-origin / scale / 2) * 2;

    for (let unit = first; origin + unit * scale < size; unit += 2) {
        const len = tickLength(unit);
        const pos = Math.floor(origin + unit * scale) + 0.5;
        add(ruler, 'path', { d: vertical ? `M10 ${pos}h${-len}` : `M${pos} 10v${-len}` });
        if (len < 10) continue;

        const label = Math.abs(unit);
        if (vertical) {
            add(ruler, 'text', { transform: `translate(6 ${pos - 1}) rotate(-90)` }, label);
        } else if (pos + 14 < size) {
            add(ruler, 'text', { x: pos + 2, y: 6 }, label);
        }
    }
    add(ruler, 'path', { d: vertical ? `M9.5 0v${size}` : `M0 9.5h${size}` });
}

function drawRulers() {
    const rulerX = document.getElementById('ruler-x');
    const rulerY = document.getElementById('ruler-y');
    drawRuler(rulerX, originX, rulerX.getBoundingClientRect().width, false);
    drawRuler(rulerY, originY, rulerY.getBoundingClientRect().height, true);

    // Cursor position
    add(rulerX, 'path', { class: 'pointer', d: 'M369.5 0v10' });
    add(rulerY, 'path', { class: 'pointer', d: 'M0 220.5h10' });
}

function drawGrid() {
    const grid = document.getElementById('grid');
    for (let unit = -130; unit <= 130; unit += 10) {
        const x = Math.round(unit * scale);
        add(grid, 'path', { class: unit % 20 ? 'minor' : 'major', d: `M${x} -190v381` });
    }
    for (let unit = -90; unit <= 90; unit += 10) {
        const y = Math.round(unit * scale);
        add(grid, 'path', { class: unit % 20 ? 'minor' : 'major', d: `M-268 ${y}h536` });
    }
}

drawGrid();
drawRulers();
window.addEventListener('resize', drawRulers);
```
